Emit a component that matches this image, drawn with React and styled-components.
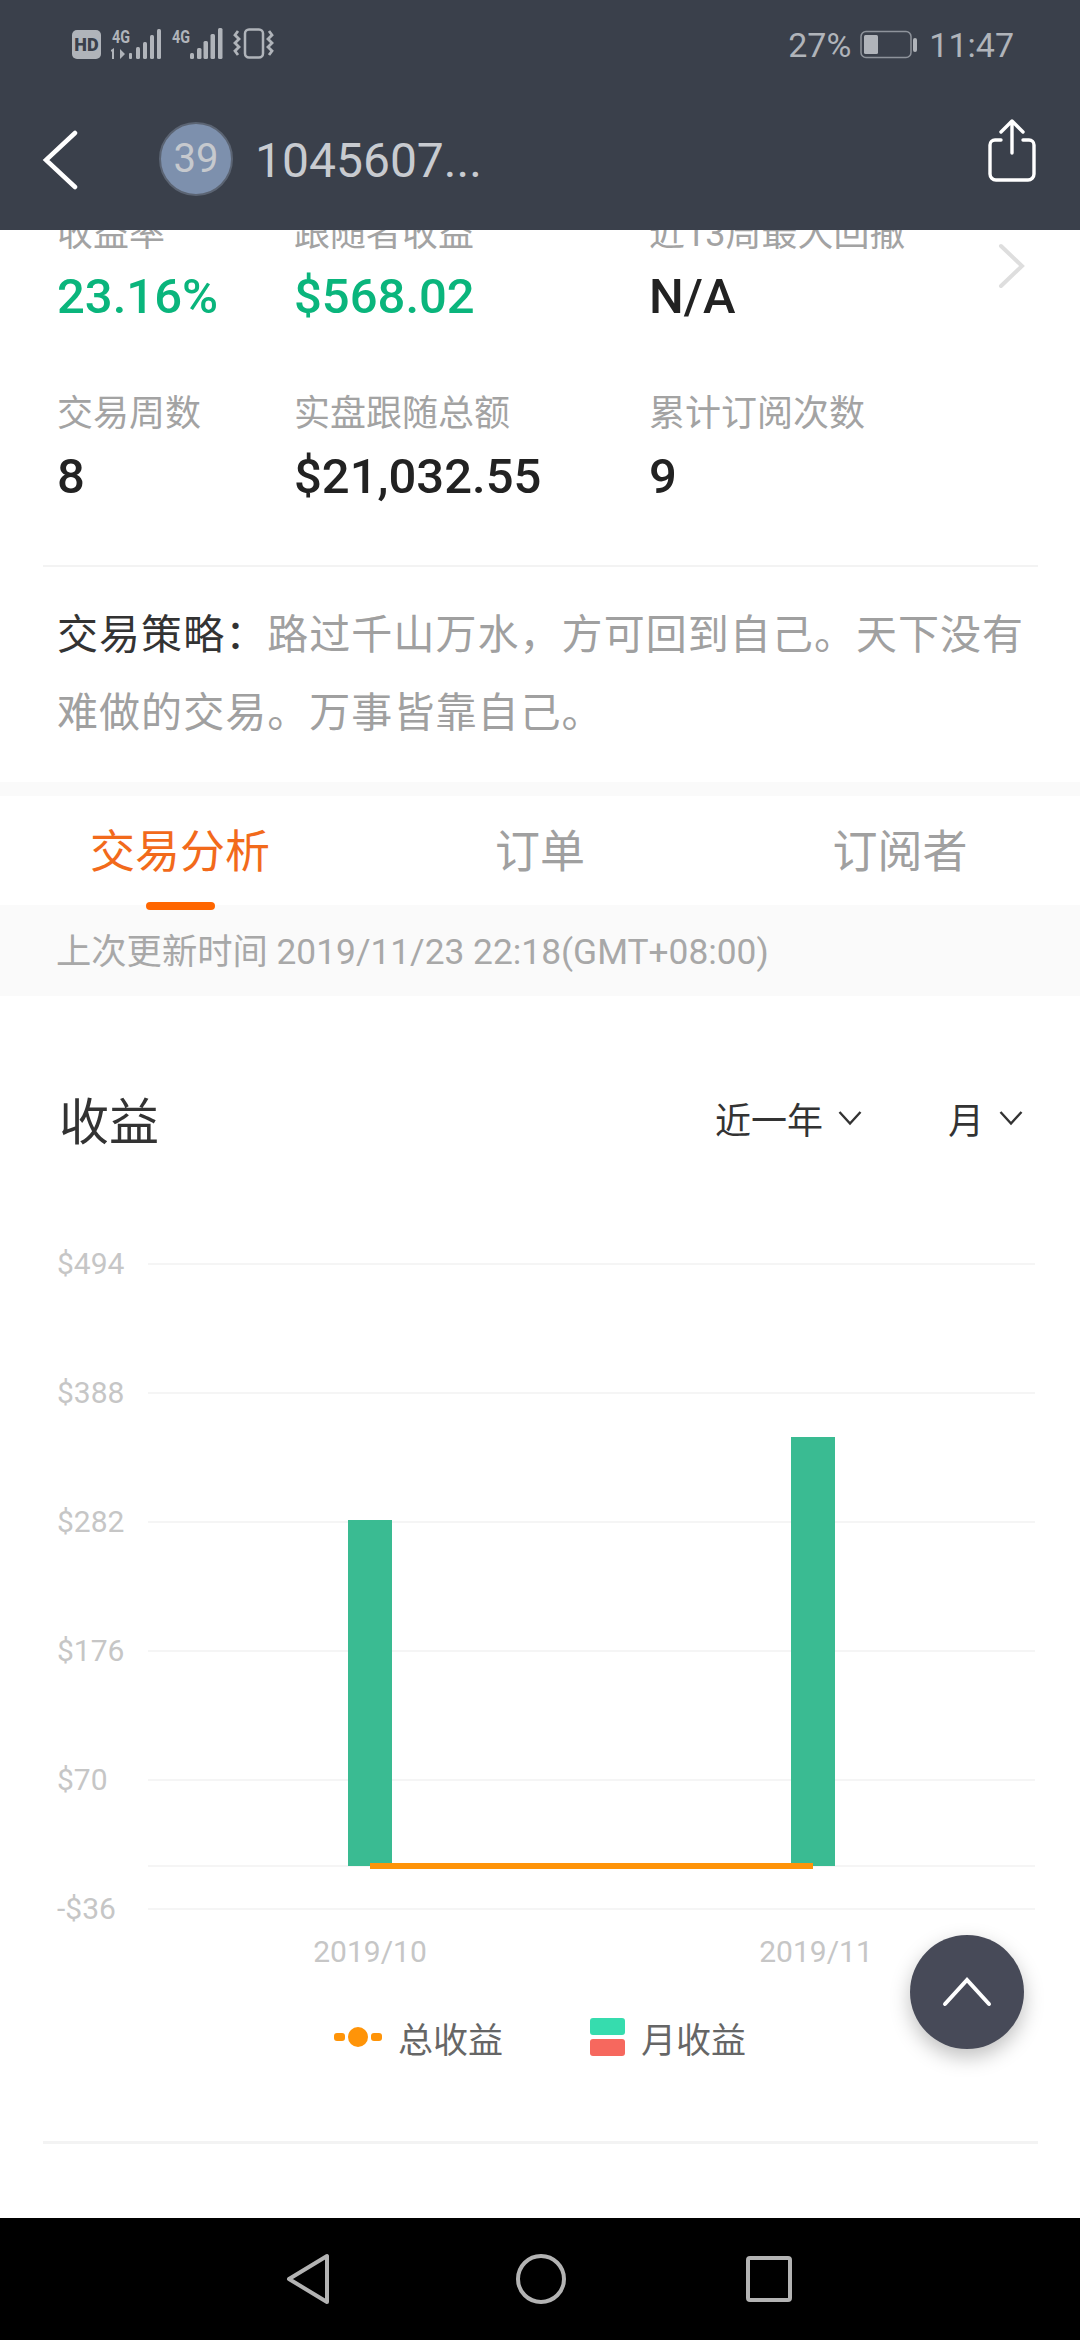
import React from 'react';
import styled, { createGlobalStyle } from 'styled-components';

const GlobalStyle = createGlobalStyle`
  html, body {
    margin: 0;
    padding: 0;
    background: #fff;
  }
  body {
    font-family: Roboto, "Noto Sans CJK SC", sans-serif;
  }
`;

const GRID_LINES = [
  { y: 1264, label: '$494' },
  { y: 1393, label: '$388' },
  { y: 1522, label: '$282' },
  { y: 1651, label: '$176' },
  { y: 1780, label: '$70' },
  { y: 1909, label: '-$36' },
];

const STATS = [
  { label: '收益率', value: '23.16%', green: true },
  { label: '跟随者收益', value: '$568.02', green: true },
  { label: '近13周最大回撤', value: 'N/A' },
  { label: '交易周数', value: '8' },
  { label: '实盘跟随总额', value: '$21,032.55' },
  { label: '累计订阅次数', value: '9' },
];

const StatusIcons = () => (
  <svg width="210" height="40" viewBox="70 25 210 40" fill="#b0b4ba">
    <rect x="72" y="30" width="29" height="29" rx="5" />
    <text x="86.5" y="51" textAnchor="middle" fontFamily="Roboto" fontWeight="900" fontSize="18" fill="#3a404b">HD</text>
    <text x="112" y="43" fontFamily="Roboto" fontWeight="700" fontSize="19" textLength="18" lengthAdjust="spacingAndGlyphs">4G</text>
    <path d="M114 48v11h-2v-8l-1 1v-2zM120 49l5 5-5 5z" />
    <rect x="129" y="53" width="3" height="6" rx="1" />
    <rect x="136" y="47" width="4" height="12" rx="1.5" />
    <rect x="143" y="42" width="4" height="17" rx="1.5" />
    <rect x="150" y="35" width="4" height="24" rx="1.5" />
    <rect x="157" y="29" width="4" height="30" rx="1.5" />
    <text x="172" y="43" fontFamily="Roboto" fontWeight="700" fontSize="19" textLength="18" lengthAdjust="spacingAndGlyphs">4G</text>
    <rect x="190" y="53" width="4" height="6" rx="1.5" />
    <rect x="197" y="48" width="4.5" height="11" rx="1.5" />
    <rect x="203.5" y="41" width="4.5" height="18" rx="1.5" />
    <rect x="210.5" y="34" width="4.5" height="25" rx="1.5" />
    <rect x="218" y="28" width="4.5" height="31" rx="1.5" />
    <rect x="245" y="29.5" width="18" height="28" rx="4" fill="none" stroke="#b0b4ba" strokeWidth="2.5" />
    <path
      d="M238 31l-3 4 4 4-4 4 4 4-4 4 3 4M269 31l3 4-4 4 4 4-4 4 4 4-3 4"
      fill="none"
      stroke="#b0b4ba"
      strokeWidth="2.8"
    />
  </svg>
);

const BatteryIcon = () => (
  <svg width="60" height="30" viewBox="0 0 60 30">
    <rect x="1" y="1.5" width="50" height="26" rx="5" fill="none" stroke="#8e939b" strokeWidth="1.5" />
    <rect x="4" y="5" width="14" height="19" rx="1.5" fill="#b0b4ba" />
    <rect x="53" y="8" width="4" height="14" rx="2" fill="#b0b4ba" />
  </svg>
);

const ShareIcon = () => (
  <svg width="50" height="63" viewBox="0 0 50 63" fill="none" stroke="#fff" strokeWidth="3.4" strokeLinecap="round">
    <path d="M25 3v31M14 13L25 2l11 11" strokeLinejoin="round" />
    <path d="M14 21H8a5 5 0 0 0-5 5v29a6 6 0 0 0 6 6h32a6 6 0 0 0 6-6V26a5 5 0 0 0-5-5h-6" />
  </svg>
);

const Chevron = () => (
  <svg width="24" height="16" viewBox="0 0 24 16" fill="none" stroke="#333" strokeWidth="2.4">
    <path d="M1.5 2L12 13.5 22.5 2" />
  </svg>
);

const ChartDrawing = () => (
  <svg width="1080" height="750" viewBox="0 1230 1080 750">
    {GRID_LINES.map((line) => (
      <g key={line.y}>
        <rect x="148" y={line.y - 1} width="887" height="2" fill="#f5f5f5" />
        <text x="57" y={line.y + 10} fontFamily="Roboto" fontSize="30" fill="#c6c6c6">
          {line.label}
        </text>
      </g>
    ))}
    <rect x="148" y="1865" width="887" height="2" fill="#f5f5f5" />
    <rect x="348" y="1520" width="44" height="346" fill="#3abb92" />
    <rect x="791" y="1437" width="44" height="429" fill="#3abb92" />
    <rect x="370" y="1863" width="443" height="6" fill="#ff9408" />
    <text x="370" y="1962" textAnchor="middle" fontFamily="Roboto" fontSize="30" fill="#c6c6c6">2019/10</text>
    <text x="816" y="1962" textAnchor="middle" fontFamily="Roboto" fontSize="30" fill="#c6c6c6">2019/11</text>
  </svg>
);

const LineMarker = () => (
  <svg width="48" height="24" viewBox="0 0 48 24" fill="#ff9408">
    <rect x="0" y="8" width="11" height="8" rx="3" />
    <rect x="37" y="8" width="11" height="8" rx="3" />
    <circle cx="24" cy="12" r="10" />
  </svg>
);

const App = () => (
  <Phone>
    <GlobalStyle />
    <Header>
      <StatusBar>
        <StatusIcons />
        <StatusRight>
          <span>27%</span>
          <BatteryIcon />
          <span>11:47</span>
        </StatusRight>
      </StatusBar>
      <Toolbar>
        <svg width="38" height="60" viewBox="0 0 38 60" fill="none" stroke="#fff" strokeWidth="4.5" strokeLinecap="round">
          <path d="M33 3L4 30l29 27" />
        </svg>
        <Avatar>39</Avatar>
        <Title>1045607...</Title>
        <ShareWrap>
          <ShareIcon />
        </ShareWrap>
      </Toolbar>
    </Header>

    <Scroller>
      <Stats>
        {STATS.map((stat) => (
          <div key={stat.label}>
            <StatLabel>{stat.label}</StatLabel>
            <StatValue $green={stat.green}>{stat.value}</StatValue>
          </div>
        ))}
        <StatsArrow>
          <svg width="28" height="46" viewBox="0 0 28 46" fill="none" stroke="#dedede" strokeWidth="4" strokeLinecap="round">
            <path d="M3 3l21 20L3 43" />
          </svg>
        </StatsArrow>
      </Stats>
      <Divider />
      <Strategy>
        <b>交易策略：</b>
        路过千山万水，方可回到自己。天下没有难做的交易。万事皆靠自己。
      </Strategy>
      <Band />
      <Tabs>
        <Tab $active>交易分析</Tab>
        <Tab>订单</Tab>
        <Tab>订阅者</Tab>
      </Tabs>
      <UpdateBar>上次更新时间 2019/11/23 22:18(GMT+08:00)</UpdateBar>
      <ChartHead>
        <ChartTitle>收益</ChartTitle>
        <Filter $right={86}>
          近一年 <Chevron />
        </Filter>
        <Filter>
          月 <Chevron />
        </Filter>
      </ChartHead>
      <ChartDrawing />
      <Legend>
        <LegendItem>
          <LineMarker />
          总收益
        </LegendItem>
        <LegendItem>
          <Swatches>
            <Swatch $color="#36dcae" />
            <Swatch $color="#f6685e" />
          </Swatches>
          月收益
        </LegendItem>
      </Legend>
      <BottomDivider />
    </Scroller>

    <NavBar>
      <svg width="44" height="52" viewBox="0 0 44 52" fill="none" stroke="#b3b3b3" strokeWidth="4" strokeLinejoin="round">
        <path d="M41 3v46L3 26z" />
      </svg>
      <svg width="50" height="50" viewBox="0 0 50 50" fill="none" stroke="#b3b3b3" strokeWidth="4">
        <circle cx="25" cy="25" r="23" />
      </svg>
      <svg width="46" height="46" viewBox="0 0 46 46" fill="none" stroke="#b3b3b3" strokeWidth="4" strokeLinejoin="round">
        <rect x="2" y="2" width="42" height="42" rx="2" />
      </svg>
    </NavBar>

    <TopButton>
      <svg width="50" height="30" viewBox="0 0 50 30" fill="none" stroke="#fff" strokeWidth="4" strokeLinecap="round">
        <path d="M3 27L25 3l22 24" />
      </svg>
    </TopButton>
  </Phone>
);

export default App;

const Phone = styled.div`
  position: relative;
  width: 1080px;
  height: 2340px;
  display: flex;
  flex-direction: column;
  overflow: hidden;
  background: #fff;
`;

const Header = styled.header`
  flex: none;
  height: 230px;
  background: #3a404b;
`;

const StatusBar = styled.div`
  height: 90px;
  display: flex;
  align-items: center;
  justify-content: space-between;
  padding: 0 66px 0 70px;
`;

const StatusRight = styled.div`
  display: flex;
  align-items: center;
  gap: 9px;
  color: #b0b4ba;
  font-size: 34px;
`;

const Toolbar = styled.div`
  height: 140px;
  display: flex;
  align-items: center;
  padding: 0 43px 0 42px;
`;

const Avatar = styled.div`
  width: 74px;
  height: 74px;
  margin: -3px 0 0 79px;
  border-radius: 50%;
  background: #7d90ad;
  border: 2px solid #5b6473;
  box-sizing: border-box;
  display: flex;
  align-items: center;
  justify-content: center;
  color: #c6c9ce;
  font-size: 40px;
`;

const Title = styled.div`
  margin-left: 22px;
  color: #c8cbd0;
  font-size: 48px;
`;

const ShareWrap = styled.div`
  margin-left: auto;
  display: flex;
  margin-top: -20px;
`;

const Scroller = styled.main`
  flex: 1;
  min-height: 0;
  overflow: hidden;
`;

const Stats = styled.section`
  position: relative;
  display: grid;
  grid-template-columns: 237px 355px 1fr;
  row-gap: 61px;
  margin-top: -22px;
  padding: 0 0 58px 57px;
`;

const StatLabel = styled.div`
  font-size: 36px;
  line-height: 52px;
  color: #a3a3a3;
`;

const StatValue = styled.div`
  margin-top: 7px;
  font-size: 49px;
  line-height: 60px;
  font-weight: 500;
  color: ${(p) => (p.$green ? '#0ab57c' : '#222')};
`;

const StatsArrow = styled.div`
  position: absolute;
  top: 35px;
  right: 54px;
`;

const Divider = styled.div`
  height: 2px;
  margin: 0 42px 0 43px;
  background: #f3f3f3;
`;

const Strategy = styled.p`
  margin: 0;
  padding: 29px 30px 30px 57px;
  font-size: 41px;
  line-height: 78px;
  letter-spacing: 1.05px;
  color: #a0a0a0;

  b {
    font-weight: 400;
    color: #333;
  }
`;

const Band = styled.div`
  height: 14px;
  background: #fafafa;
`;

const Tabs = styled.nav`
  display: grid;
  grid-template-columns: repeat(3, 1fr);
  height: 109px;
`;

const Tab = styled.div`
  position: relative;
  text-align: center;
  font-size: 45px;
  line-height: 114px;
  color: ${(p) => (p.$active ? '#f26a1b' : '#a0a0a0')};

  &::after {
    content: '';
    display: ${(p) => (p.$active ? 'block' : 'none')};
    position: absolute;
    left: 146px;
    bottom: 0;
    width: 69px;
    height: 8px;
    border-radius: 4px;
    background: #ff6600;
  }
`;

const UpdateBar = styled.div`
  height: 91px;
  padding-left: 56px;
  background: #fafafa;
  font-size: 35.3px;
  line-height: 94px;
  color: #a8a8a8;
`;

const ChartHead = styled.div`
  height: 234px;
  padding: 10px 57px 0 59px;
  box-sizing: border-box;
  display: flex;
  align-items: center;
`;

const ChartTitle = styled.h2`
  margin: 0 auto 0 0;
  font-size: 50px;
  font-weight: 400;
  color: #333;
`;

const Filter = styled.div`
  display: flex;
  align-items: center;
  gap: 15px;
  margin-right: ${(p) => p.$right || 0}px;
  font-size: 36px;
  color: #333;
`;

const Legend = styled.div`
  height: 60px;
  margin-top: 23px;
  padding-left: 334px;
  display: flex;
  align-items: center;
  gap: 87px;
`;

const LegendItem = styled.div`
  display: flex;
  align-items: center;
  gap: 16px;
  font-size: 35px;
  color: #666;
`;

const Swatches = styled.div`
  display: flex;
  flex-direction: column;
  gap: 4px;
`;

const Swatch = styled.div`
  width: 35px;
  height: 17px;
  border-radius: 3px;
  background: ${(p) => p.$color};
`;

const BottomDivider = styled.div`
  height: 3px;
  margin: 74px 42px 0 43px;
  background: #f3f3f3;
`;

const NavBar = styled.footer`
  flex: none;
  height: 122px;
  background: #000;
  box-sizing: border-box;
  padding: 0 288px 0 286px;
  display: flex;
  align-items: center;
  justify-content: space-between;

  svg:nth-child(2) {
    margin-left: 5px;
  }
`;

const TopButton = styled.div`
  position: absolute;
  left: 910px;
  top: 1935px;
  width: 114px;
  height: 114px;
  border-radius: 50%;
  background: #474a58;
  box-shadow: 0 8px 20px rgba(0, 0, 0, 0.25);
  display: flex;
  align-items: center;
  justify-content: center;
`;
